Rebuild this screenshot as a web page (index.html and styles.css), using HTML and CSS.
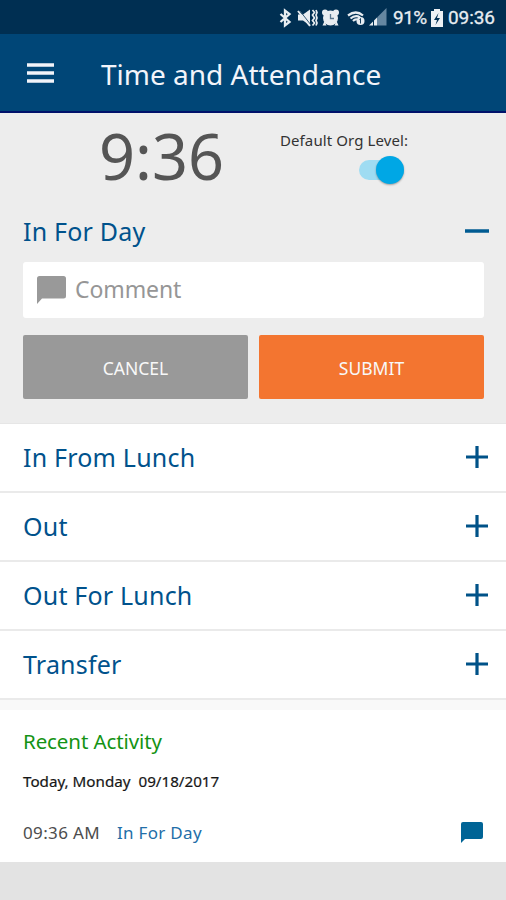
FILE: index.html
```html
<!DOCTYPE html>
<html lang="en">
<head>
<meta charset="utf-8">
<title>Time and Attendance</title>
<link rel="stylesheet" href="styles.css">
</head>
<body>
<div class="status">
  <svg class="status-icons" width="109" height="20" viewBox="0 0 109 20">
    <path d="M1.500 6l9 8-4.500 3.500V2.500L10.500 6l-9 8" fill="none" stroke="#e8edf1" stroke-width="2.300"/>
    <g fill="#e8edf1">
      <path d="M19 6.500h5l7-5v16l-7-5h-5z"/>
      <path d="M33.500 2l2 2.500-2 2.500 2 3-2 2.500 2 2.500-2 2.500M37 2l1 2.500-1 2.500 1 3-1 2.500 1 2.500-1 2.500" fill="none" stroke="#e8edf1" stroke-width="1.700"/>
      <path d="M19 3l12 15" stroke="#e8edf1" stroke-width="2"/>
      <path d="M21 3l11 14" stroke="#345a76" stroke-width="1"/>
      <circle cx="51.500" cy="10" r="7.500"/><circle cx="46" cy="4.500" r="3"/><circle cx="57" cy="4.500" r="3"/>
      <path d="M45.500 13l-2 4.500h4zM57.500 13l2 4.500h-4z"/>
      <path d="M51.500 6v4.500h3.500" fill="none" stroke="#5b7890" stroke-width="1.300"/>
      <path d="M69 7.500q8-6 15 0M71.500 10.500q5-4 9.500-1M74 13q2-2 4-1.500" fill="none" stroke="#e8edf1" stroke-width="2.200"/>
      <circle cx="81.500" cy="13" r="4"/>
      <path d="M80.500 11.500l1-1v5" fill="none" stroke="#173f5e"/>
    </g>
    <path d="M98 9.500L107.500 0v17.500H98z" fill="#6687a1"/>
    <path d="M90 17.500l8-8v8z" fill="#e8edf1"/>
    <path d="M94.500 11v7" stroke="#002f52"/>
  </svg>
  <span class="battery-text">91%</span>
  <svg class="battery" width="12" height="18" viewBox="0 0 12 18"><path d="M0 2h3V0h6v2h3v16H0z" fill="#eef1f4"/><path d="M7.500 4L3 11h3l-1.500 5L9 9H6z" fill="#002f52"/></svg>
  <span class="clock">09:36</span>
</div>
<header class="bar">
  <svg class="menu" width="27" height="20" viewBox="0 0 27 20"><path d="M0 2h27M0 10h27M0 18h27" stroke="#f2f4fa" stroke-width="3.600"/></svg>
  <h1 class="title">Time and Attendance</h1>
</header>
<main>
  <section class="punch">
    <div class="top">
      <div class="time">9:36</div>
      <div class="org">
        <span class="org-label">Default Org Level:</span>
        <span class="switch"><span class="knob"></span></span>
      </div>
    </div>
    <div class="head">
      <h2 class="label">In For Day</h2>
      <svg class="sign" width="24" height="24" viewBox="0 0 24 24"><path d="M0 12h24" stroke="#005b92" stroke-width="3.500"/></svg>
    </div>
    <div class="comment">
      <svg width="29" height="28" viewBox="0 0 29 28"><path d="M2.500 0h24A2.500 2.500 0 0 1 29 2.500v17.500a2.500 2.500 0 0 1-2.500 2.500H5L0 28V2.500A2.500 2.500 0 0 1 2.500 0z" fill="#999"/></svg>
      <span class="placeholder">Comment</span>
    </div>
    <div class="buttons">
      <button class="btn cancel">CANCEL</button>
      <button class="btn submit">SUBMIT</button>
    </div>
  </section>
  <ul class="list">
    <li class="row"><span class="label">In From Lunch</span><svg width="24" height="24" viewBox="0 0 24 24"><path d="M1 12h22M12 1v22" stroke="#005288" stroke-width="3.200"/></svg></li>
    <li class="row"><span class="label">Out</span><svg width="24" height="24" viewBox="0 0 24 24"><path d="M1 12h22M12 1v22" stroke="#005288" stroke-width="3.200"/></svg></li>
    <li class="row"><span class="label">Out For Lunch</span><svg width="24" height="24" viewBox="0 0 24 24"><path d="M1 12h22M12 1v22" stroke="#005288" stroke-width="3.200"/></svg></li>
    <li class="row"><span class="label">Transfer</span><svg width="24" height="24" viewBox="0 0 24 24"><path d="M1 12h22M12 1v22" stroke="#005288" stroke-width="3.200"/></svg></li>
  </ul>
  <section class="activity">
    <h3 class="recent">Recent Activity</h3>
    <div class="date">Today, Monday&nbsp; 09/18/2017</div>
    <div class="entry">
      <span class="at">09:36 AM</span>
      <span class="what">In For Day</span>
      <svg class="note" width="22" height="21" viewBox="0 0 22 21"><path d="M2 0h18a2 2 0 0 1 2 2v13a2 2 0 0 1-2 2H4l-4 4V2a2 2 0 0 1 2-2z" fill="#006496"/></svg>
    </div>
  </section>
</main>
</body>
</html>
```
FILE: styles.css
```css
* { box-sizing: border-box; }
body {
  margin: 0;
  height: 900px;
  overflow: hidden;
  background: #e3e3e3;
  font-family: "Noto Sans", "Open Sans", sans-serif;
}
h1, h2, h3, ul { margin: 0; padding: 0; font-weight: 400; list-style: none; }
svg { display: block; flex: none; }
span, h1, h2, h3, .time, .date { white-space: nowrap; }

.status {
  display: flex;
  align-items: center;
  height: 34px;
  padding: 2px 10px 0 279px;
  background: #002f52;
  color: #e8edf1;
  font: 18px/34px Roboto, sans-serif;
}
.battery-text { width: 36px; margin-left: 5px; font-size: 19px; letter-spacing: -0.5px; }
.battery { margin: 0 5px 0 2px; }
.clock { font-size: 19px; letter-spacing: -0.1px; }
.battery-text, .clock { -webkit-text-stroke: 0.3px; }

.bar {
  display: flex;
  align-items: center;
  height: 79px;
  padding: 0 0 0 27px;
  background: #004677;
  border-bottom: 2px solid #00126a;
}
.title { margin-left: 47px; padding-top: 3px; font-size: 28px; line-height: 36px; color: #f2f4fa; }

.punch { height: 311px; padding: 0 22px 0 23px; background: #ededed; border-bottom: 1px solid #e6e6e6; }
.top { display: flex; height: 87px; }
.time { width: 257px; padding-left: 76px; font-size: 63px; line-height: 86px; color: #555; }
.org { display: flex; flex-direction: column; width: 129px; padding-top: 17px; }
.org-label { font-size: 15px; line-height: 20px; letter-spacing: 0.1px; color: #333; }
.switch {
  align-self: flex-end;
  display: flex;
  justify-content: flex-end;
  align-items: center;
  width: 45px;
  height: 20px;
  margin: 10px 5px 0 0;
  border-radius: 10px;
  background: #9fdcf2;
}
.knob { flex: none; width: 28px; height: 28px; border-radius: 50%; background: #00a7e5; box-shadow: 0 1px 2px #0005; }

.label { font-size: 25px; line-height: 36px; letter-spacing: 0.2px; color: #00528c; }
.head { display: flex; align-items: center; justify-content: space-between; height: 62px; padding-bottom: 1px; margin-right: -5px; }
.comment {
  display: flex;
  align-items: center;
  height: 56px;
  padding-left: 14px;
  border-radius: 3px;
  background: #fff;
}
.placeholder { margin: -2px 0 0 9px; font-size: 23px; line-height: 32px; letter-spacing: -0.1px; color: #969696; }
.buttons { display: grid; grid-template-columns: 1fr 1fr; gap: 11px; margin-top: 17px; }
.btn {
  height: 64px;
  padding: 1px 0 0;
  border: 0;
  border-radius: 2px;
  color: #f8f8f8;
  font: 17.500px/24px "Noto Sans", sans-serif;
}
.cancel { background: #999; }
.submit { background: #f37530; }

.row {
  display: flex;
  align-items: center;
  justify-content: space-between;
  height: 69px;
  padding: 0 17px 2px 23px;
  border-bottom: 2px solid #eaeaea;
  background: #fff;
}
.list { border-bottom: 10px solid #f9f9f9; }
.activity { height: 152px; padding: 17px 23px 0; background: #fff; }
.recent { font-size: 20.500px; line-height: 28px; letter-spacing: -0.1px; color: #149314; }
.date { margin-top: 14px; font-size: 15.200px; line-height: 24px; color: #161616; -webkit-text-stroke: 0.2px; }
.entry { display: flex; align-items: center; height: 28px; margin-top: 25px; font-size: 17px; }
.at { width: 94px; letter-spacing: 0.35px; color: #4d4d4d; }
.what { letter-spacing: 0.3px; color: #226ea8; }
.note { margin-left: auto; }
```
